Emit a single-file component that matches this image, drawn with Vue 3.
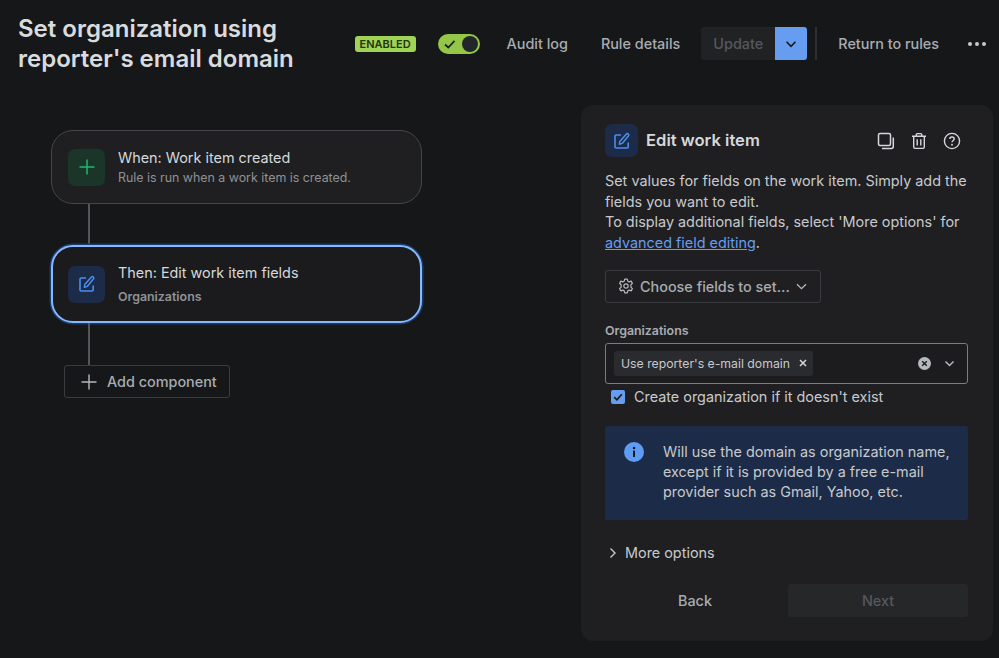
<script setup>
const introLines = ['Set values for fields on the work item. Simply add the', 'fields you want to edit.', "To display additional fields, select 'More options' for "]
</script>

<template>
  <div class="page">
    <header class="top">
      <h1 class="title">Set organization using<br />reporter's email domain</h1>
      <div class="actions">
        <span class="badge">ENABLED</span>
        <span class="toggle">
          <svg width="14" height="14" viewBox="0 0 14 14" fill="none"><path d="M2 7.5 5.3 10.5 11.5 3.8" stroke="#1d2125" stroke-width="1.7" /></svg>
          <span class="knob"></span>
        </span>
        <span class="link audit">Audit log</span>
        <span class="link details">Rule details</span>
        <span class="update-group">
          <span class="update">Update</span>
          <span class="caret-btn">
            <svg width="12" height="12" viewBox="0 0 12 12" fill="none"><path d="M1.5 3.8 6 8.3 10.5 3.8" stroke="#16181b" stroke-width="1.6" /></svg>
          </span>
        </span>
        <span class="divider"></span>
        <span class="link back-link">Return to rules</span>
        <span class="dots"><i></i><i></i><i></i></span>
      </div>
    </header>

    <main class="body">
      <section class="flow">
        <div class="card">
          <span class="tile green">
            <svg width="18" height="18" viewBox="0 0 18 18" fill="none"><path d="M9 1.5V16.5M1.5 9H16.5" stroke="#22b573" stroke-width="1.5" /></svg>
          </span>
          <div class="card-text">
            <div class="card-title">When: Work item created</div>
            <div class="card-sub">Rule is run when a work item is created.</div>
          </div>
        </div>
        <div class="line l1"></div>
        <div class="card active">
          <span class="tile blue">
            <svg width="18" height="18" viewBox="0 0 18 18" fill="none"><path d="M8 3H3.2C2.5 3 2 3.5 2 4.2V15C2 15.6 2.5 16 3.2 16H14C14.6 16 15.2 15.6 15.2 15V10.5" stroke="#4a8fee" stroke-width="1.6" /><path d="M6.8 9.5 13.2 2.2C13.8 1.5 14.7 1.5 15.3 2 15.9 2.6 16 3.4 15.4 4.1L9.2 11.4 6.4 12.2 6.8 9.5Z" stroke="#4a8fee" stroke-width="1.5" stroke-linejoin="round" /></svg>
          </span>
          <div class="card-text">
            <div class="card-title">Then: Edit work item fields</div>
            <div class="card-sub strong">Organizations</div>
          </div>
        </div>
        <div class="line l2"></div>
        <div class="add">
          <svg width="16" height="16" viewBox="0 0 16 16" fill="none"><path d="M8 .5V15.5M.5 8H15.5" stroke="#b5b8bd" stroke-width="1.4" /></svg>
          <span>Add component</span>
        </div>
      </section>

      <aside class="panel">
        <div class="panel-head">
          <span class="tile blue small">
            <svg width="18" height="18" viewBox="0 0 18 18" fill="none"><path d="M8 3H3.2C2.5 3 2 3.5 2 4.2V15C2 15.6 2.5 16 3.2 16H14C14.6 16 15.2 15.6 15.2 15V10.5" stroke="#4a8fee" stroke-width="1.6" /><path d="M6.8 9.5 13.2 2.2C13.8 1.5 14.7 1.5 15.3 2 15.9 2.6 16 3.4 15.4 4.1L9.2 11.4 6.4 12.2 6.8 9.5Z" stroke="#4a8fee" stroke-width="1.5" stroke-linejoin="round" /></svg>
          </span>
          <h2 class="panel-title">Edit work item</h2>
          <span class="head-icons">
            <svg width="18" height="18" viewBox="0 0 18 18" fill="none"><rect x="1.5" y="1.5" width="12" height="12" rx="1.5" stroke="#d6d8db" stroke-width="1.5" /><path d="M16.3 5.5V14.5C16.3 15.6 15.5 16.4 14.4 16.4H5" stroke="#d6d8db" stroke-width="1.5" /></svg>
            <svg width="18" height="18" viewBox="0 0 18 18" fill="none"><path d="M2 4.2H16M6.3 4V2.6C6.3 2 6.7 1.6 7.3 1.6H10.7C11.3 1.6 11.7 2 11.7 2.6V4M3.7 4.4V15C3.7 15.9 4.3 16.4 5.2 16.4H12.8C13.7 16.4 14.3 15.9 14.3 15V4.4M7.2 7.2V13.4M10.8 7.2V13.4" stroke="#d6d8db" stroke-width="1.4" /></svg>
            <svg width="18" height="18" viewBox="0 0 18 18" fill="none"><circle cx="9" cy="9" r="7.6" stroke="#d6d8db" stroke-width="1.4" /><path d="M6.8 7.1C6.8 5.8 7.8 5 9 5 10.3 5 11.2 5.8 11.2 6.9 11.2 8.4 9 8.5 9 10.3" stroke="#d6d8db" stroke-width="1.4" /><circle cx="9" cy="12.8" r=".95" fill="#d6d8db" /></svg>
          </span>
        </div>

        <p class="intro">{{ introLines[0] }}<br />{{ introLines[1] }}<br />{{ introLines[2] }}<br /><a class="anchor">advanced field editing</a>.</p>

        <div class="choose">
          <svg width="16" height="16" viewBox="0 0 16 16" fill="none"><path d="M6.7 1.2H9.3L9.8 3.2 11.2 3.9 13.1 3.1 14.4 5.4 12.9 6.8V9.2L14.4 10.6 13.1 12.9 11.2 12.1 9.8 12.8 9.3 14.8H6.7L6.2 12.8 4.8 12.1 2.9 12.9 1.6 10.6 3.1 9.2V6.8L1.6 5.4 2.9 3.1 4.8 3.9 6.2 3.2Z" stroke="#b5b8bd" stroke-width="1.2" stroke-linejoin="round" /><circle cx="8" cy="8" r="2.2" stroke="#b5b8bd" stroke-width="1.2" /></svg>
          <span>Choose fields to set...</span>
          <svg width="11" height="11" viewBox="0 0 11 11" fill="none"><path d="M1 3.2 5.5 7.7 10 3.2" stroke="#b5b8bd" stroke-width="1.3" /></svg>
        </div>

        <label class="field-label">Organizations</label>
        <div class="select">
          <span class="chip">Use reporter's e-mail domain
            <svg width="8" height="8" viewBox="0 0 8 8" fill="none"><path d="M1 1 7 7M7 1 1 7" stroke="#d6d8db" stroke-width="1.5" /></svg>
          </span>
          <span class="select-icons">
            <svg width="13" height="13" viewBox="0 0 13 13" fill="none"><circle cx="6.5" cy="6.5" r="6.5" fill="#b5b8bd" /><path d="M4.2 4.2 8.8 8.8M8.8 4.2 4.2 8.8" stroke="#1f1f21" stroke-width="1.5" /></svg>
            <svg width="11" height="11" viewBox="0 0 11 11" fill="none"><path d="M1.5 3.5 5.5 7.5 9.5 3.5" stroke="#b5b8bd" stroke-width="1.5" /></svg>
          </span>
        </div>
        <div class="check-row">
          <span class="check">
            <svg width="10" height="10" viewBox="0 0 10 10" fill="none"><path d="M1.2 5.2 3.9 7.8 8.8 2.2" stroke="#16181b" stroke-width="1.7" /></svg>
          </span>
          <span>Create organization if it doesn't exist</span>
        </div>

        <div class="info">
          <svg class="info-icon" width="20" height="20" viewBox="0 0 20 20"><circle cx="10" cy="10" r="10" fill="#5d9cf5" /><rect x="9" y="8.6" width="2" height="6.4" rx=".6" fill="#16181b" /><circle cx="10" cy="6" r="1.25" fill="#16181b" /></svg>
          <p>Will use the domain as organization name, except if it is provided by a free e-mail provider such as Gmail, Yahoo, etc.</p>
        </div>

        <div class="more">
          <svg width="8" height="12" viewBox="0 0 8 12" fill="none"><path d="M1.5 1.5 6 6 1.5 10.5" stroke="#c7c9cd" stroke-width="1.4" /></svg>
          <span>More options</span>
        </div>

        <div class="footer">
          <span class="btn">Back</span>
          <span class="btn disabled">Next</span>
        </div>
      </aside>
    </main>
  </div>
</template>

<style>
html, body { margin: 0; background: #161719; }
</style>

<style scoped>
.page {
  width: 999px;
  height: 658px;
  overflow: hidden;
  background: #161719;
  color: #d6d8db;
  font-family: Inter, "Liberation Sans", sans-serif;
  display: flex;
  flex-direction: column;
}
.top {
  display: flex;
  justify-content: space-between;
  padding: 14px 13px 0 18px;
  height: 91px;
  box-sizing: border-box;
}
.title {
  margin: 0;
  font-size: 24px;
  line-height: 30px;
  font-weight: 600;
  color: #d9dbde;
}
.actions {
  display: flex;
  align-items: center;
  height: 33px;
  margin-top: 13px;
  font-size: 14.4px;
}
.badge {
  width: 61px;
  height: 16px;
  line-height: 16px;
  border-radius: 3px;
  background: #a0d456;
  color: #26330f;
  font-size: 11px;
  font-weight: 600;
  text-align: center;
}
.toggle {
  margin-left: 22px;
  width: 42px;
  height: 20px;
  background: #94c748;
  border-radius: 10px;
  display: flex;
  align-items: center;
  padding: 0 2px 0 5px;
  box-sizing: border-box;
  justify-content: space-between;
}
.knob {
  width: 16px;
  height: 16px;
  border-radius: 50%;
  background: #22262b;
}
.link { color: #a9acb1; font-weight: 500; }
.audit { margin-left: 27px; }
.details { margin-left: 33px; }
.update-group {
  display: flex;
  margin-left: 21px;
  height: 33px;
  border-radius: 3px;
  overflow: hidden;
}
.update {
  width: 74px;
  background: #212224;
  color: #55585d;
  font-weight: 500;
  line-height: 33px;
  text-align: center;
}
.caret-btn {
  width: 32px;
  background: #669df1;
  display: flex;
  align-items: center;
  justify-content: center;
}
.divider {
  width: 2px;
  height: 33px;
  background: #2c2e31;
  margin-left: 8px;
}
.back-link { margin-left: 21px; }
.dots {
  display: flex;
  gap: 3px;
  margin-left: 29px;
}
.dots i {
  width: 4px;
  height: 4px;
  border-radius: 50%;
  background: #c7c9cd;
}
.body {
  flex: 1;
  display: flex;
  justify-content: space-between;
  padding-right: 6px;
  min-height: 0;
}
.flow {
  width: 371px;
  margin-left: 51px;
  padding-top: 39px;
  display: flex;
  flex-direction: column;
  align-items: flex-start;
}
.card {
  width: 371px;
  height: 74px;
  box-sizing: border-box;
  border: 1px solid #444649;
  border-radius: 22px;
  background: #1f1f21;
  display: flex;
  align-items: center;
  padding: 0 16px;
  gap: 13px;
}
.card.active {
  height: 78px;
  border: 2px solid #85b8ff;
  box-shadow: 0 0 0 1.5px #1c3a68;
  background: #1b1b1d;
  padding: 0 15px;
}
.tile {
  width: 37px;
  height: 37px;
  flex: none;
  border-radius: 7px;
  display: flex;
  align-items: center;
  justify-content: center;
}
.tile.green { background: #1b3529; }
.tile.blue { background: #1c2b47; }
.tile.small { width: 33px; height: 33px; }
.card-title {
  font-size: 14.4px;
  line-height: 18px;
  color: #d6d8db;
}
.card-sub {
  font-size: 12.4px;
  line-height: 16px;
  margin-top: 3px;
  color: #8f9297;
}
.card-sub.strong {
  font-weight: 600;
  margin-top: 7px;
}
.line {
  width: 2px;
  margin-left: 37px;
  background: #54565a;
}
.l1 { height: 41px; }
.l2 { height: 42px; }
.add {
  margin-left: 13px;
  width: 166px;
  height: 33px;
  box-sizing: border-box;
  border: 1px solid #3a3c3f;
  border-radius: 3px;
  display: flex;
  align-items: center;
  padding-left: 16px;
  gap: 10px;
  font-size: 14.4px;
  font-weight: 500;
  color: #a9acb1;
}
.panel {
  width: 412px;
  height: 536px;
  margin-top: 14px;
  box-sizing: border-box;
  background: #1f1f21;
  border-radius: 12px;
  padding: 19px 25px 0 24px;
  display: flex;
  flex-direction: column;
}
.panel-head {
  display: flex;
  align-items: center;
  height: 33px;
  gap: 8px;
}
.panel-title {
  margin: -2px 0 0;
  font-size: 16.6px;
  font-weight: 600;
  color: #d6d8db;
  flex: 1;
}
.head-icons {
  display: flex;
  gap: 15px;
  margin-right: 7px;
}
.intro {
  margin: 14px 0 0;
  font-size: 14.4px;
  line-height: 20.7px;
  color: #c7c9cd;
}
.anchor {
  color: #669df1;
  text-decoration: underline;
}
.choose {
  margin-top: 16px;
  width: 216px;
  height: 33px;
  box-sizing: border-box;
  border: 1px solid #3a3c3f;
  border-radius: 3px;
  display: flex;
  align-items: center;
  padding-left: 12px;
  gap: 6px;
  font-size: 14.4px;
  font-weight: 500;
  color: #a9acb1;
}
.field-label {
  margin-top: 20px;
  font-size: 12.4px;
  line-height: 16px;
  font-weight: 600;
  color: #a9acb1;
}
.select {
  margin-top: 4px;
  height: 41px;
  box-sizing: border-box;
  border: 1px solid #7a7d82;
  border-radius: 3px;
  background: #1c1c1e;
  display: flex;
  align-items: center;
  justify-content: space-between;
  padding: 0 12px 0 8px;
}
.chip {
  height: 25px;
  box-sizing: border-box;
  background: #2a2b2e;
  border-radius: 3px;
  display: flex;
  align-items: center;
  padding: 0 6px 0 7px;
  gap: 9px;
  font-size: 12.25px;
  color: #c7c9cd;
}
.select-icons {
  display: flex;
  align-items: center;
  gap: 13px;
}
.check-row {
  display: flex;
  align-items: center;
  gap: 9px;
  height: 26px;
  padding-left: 6px;
  font-size: 14.4px;
  color: #c7c9cd;
}
.check {
  width: 14px;
  height: 14px;
  border-radius: 2px;
  background: #669df1;
  display: flex;
  align-items: center;
  justify-content: center;
}
.info {
  margin-top: 16px;
  height: 94px;
  box-sizing: border-box;
  background: #1c2b47;
  border-radius: 2px;
  padding: 16px 10px 0 19px;
  display: flex;
  gap: 19px;
}
.info-icon { flex: none; }
.info p {
  margin: 0;
  font-size: 14.4px;
  line-height: 20.3px;
  color: #c7c9cd;
}
.more {
  margin-top: 24px;
  padding-left: 4px;
  display: flex;
  align-items: center;
  gap: 8px;
  font-size: 14.4px;
  line-height: 18px;
  color: #c7c9cd;
}
.footer {
  margin-top: 22px;
  display: flex;
  gap: 3px;
}
.btn {
  flex: 1;
  height: 33px;
  line-height: 33px;
  text-align: center;
  font-size: 14.4px;
  font-weight: 500;
  color: #a9acb1;
  border-radius: 3px;
}
.btn.disabled {
  background: #262729;
  color: #55585d;
}
</style>
